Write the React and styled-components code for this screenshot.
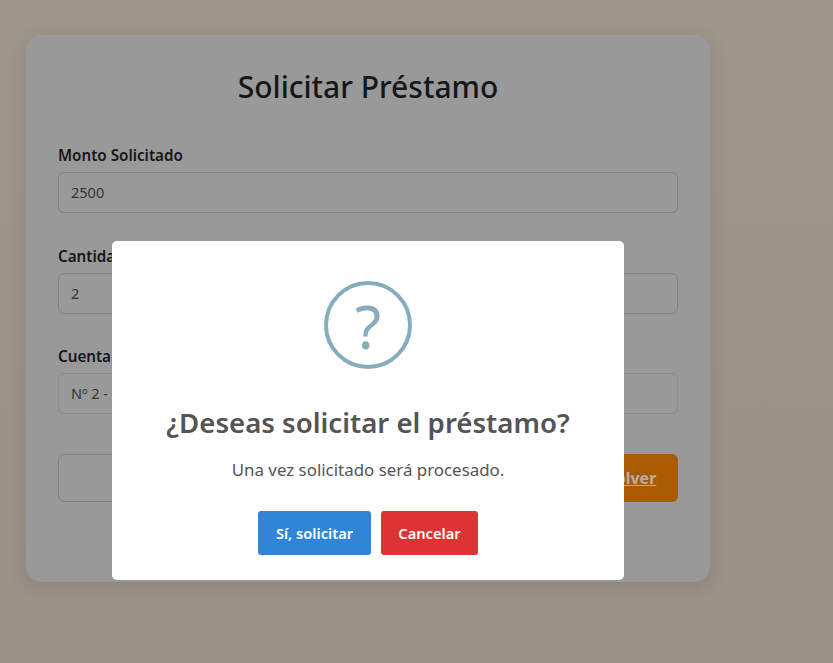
import React from "react";
import styled, { createGlobalStyle } from "styled-components";

const GlobalStyle = createGlobalStyle`
  html, body {
    margin: 0;
    padding: 0;
    height: 100%;
    background: #9a9286;
    font-family: "Noto Sans", "Open Sans", sans-serif;
  }
`;

const Page = styled.div`
  position: relative;
  box-sizing: border-box;
  width: 833px;
  height: 663px;
  padding: 35px 123px 0 26px;
  overflow: hidden;
  background: linear-gradient(180deg, #9e968b 0%, #999185 100%);
`;

const Card = styled.form`
  box-sizing: border-box;
  height: 547px;
  padding: 32px;
  background: #999999;
  border-radius: 16px;
  box-shadow: 0 4px 20px rgba(0, 0, 0, 0.1);
`;

const Title = styled.h1`
  margin: 0 0 36px;
  height: 40px;
  font-size: 30px;
  line-height: 40px;
  font-weight: 500;
  text-align: center;
  color: #14171a;
`;

const Field = styled.div`
  margin-bottom: 30.5px;
`;

const Label = styled.label`
  display: block;
  height: 24px;
  margin-bottom: 5px;
  font-size: 15.2px;
  line-height: 24px;
  font-weight: 600;
  color: #14171a;
`;

const Input = styled.div`
  box-sizing: border-box;
  height: 41px;
  padding: 0 12px;
  border: 1px solid ${(props) => (props.$muted ? "#8c8c8c" : "#7f7f7f")};
  border-radius: 6px;
  font-size: 14.5px;
  line-height: 39px;
  color: #323537;
`;

const Actions = styled.div`
  display: flex;
  gap: 10px;
  margin-top: 40px;
`;

const SubmitButton = styled.button`
  flex: 1;
  height: 48px;
  padding: 0;
  background: transparent;
  border: 1px solid #7f7f7f;
  border-radius: 6px;
`;

const BackLink = styled.a`
  box-sizing: border-box;
  width: 96px;
  height: 48px;
  padding-left: 2px;
  background: #a85b00;
  border-radius: 6px;
  font-size: 16px;
  line-height: 48px;
  font-weight: 700;
  text-align: center;
  text-decoration: underline;
  color: #b5b0a8;
`;

const Modal = styled.div`
  position: absolute;
  left: 112px;
  top: 241px;
  box-sizing: border-box;
  width: 512px;
  height: 339px;
  padding-top: 40px;
  background: #ffffff;
  border-radius: 5px;
  display: flex;
  flex-direction: column;
  align-items: center;
`;

const QuestionIcon = styled.div`
  box-sizing: border-box;
  width: 88px;
  height: 88px;
  border: 4px solid #87adbd;
  border-radius: 50%;
  font-size: 60px;
  line-height: 82px;
  font-weight: 400;
  text-align: center;
  color: #87adbd;
`;

const ModalTitle = styled.h2`
  margin: 31px 0 0;
  font-size: 27.6px;
  line-height: 44px;
  font-weight: 600;
  color: #545454;
`;

const ModalText = styled.p`
  margin: 13px 0 0;
  font-size: 16.9px;
  line-height: 26px;
  font-weight: 400;
  color: #545454;
`;

const ModalActions = styled.div`
  display: flex;
  gap: 10px;
  margin-top: 28px;
`;

const ModalButton = styled.button`
  width: ${(props) => props.$width}px;
  height: 44px;
  padding: 0;
  border: none;
  border-radius: 3px;
  background: ${(props) => props.$color};
  font-family: inherit;
  font-size: 14.7px;
  font-weight: 600;
  color: #ffffff;
`;

const App = () => (
  <Page>
    <GlobalStyle />
    <Card>
      <Title>Solicitar Préstamo</Title>
      <Field>
        <Label>Monto Solicitado</Label>
        <Input>2500</Input>
      </Field>
      <Field>
        <Label>Cantidad de Cuotas</Label>
        <Input>2</Input>
      </Field>
      <Field>
        <Label>Cuenta de Destino</Label>
        <Input $muted>Nº 2 - Caja de Ahorro</Input>
      </Field>
      <Actions>
        <SubmitButton type="button" aria-label="Solicitar" />
        <BackLink>Volver</BackLink>
      </Actions>
    </Card>
    <Modal>
      <QuestionIcon>?</QuestionIcon>
      <ModalTitle>¿Deseas solicitar el préstamo?</ModalTitle>
      <ModalText>Una vez solicitado será procesado.</ModalText>
      <ModalActions>
        <ModalButton type="button" $width={113} $color="#3085d6">Sí, solicitar</ModalButton>
        <ModalButton type="button" $width={97} $color="#dd3333">Cancelar</ModalButton>
      </ModalActions>
    </Modal>
  </Page>
);

export default App;
